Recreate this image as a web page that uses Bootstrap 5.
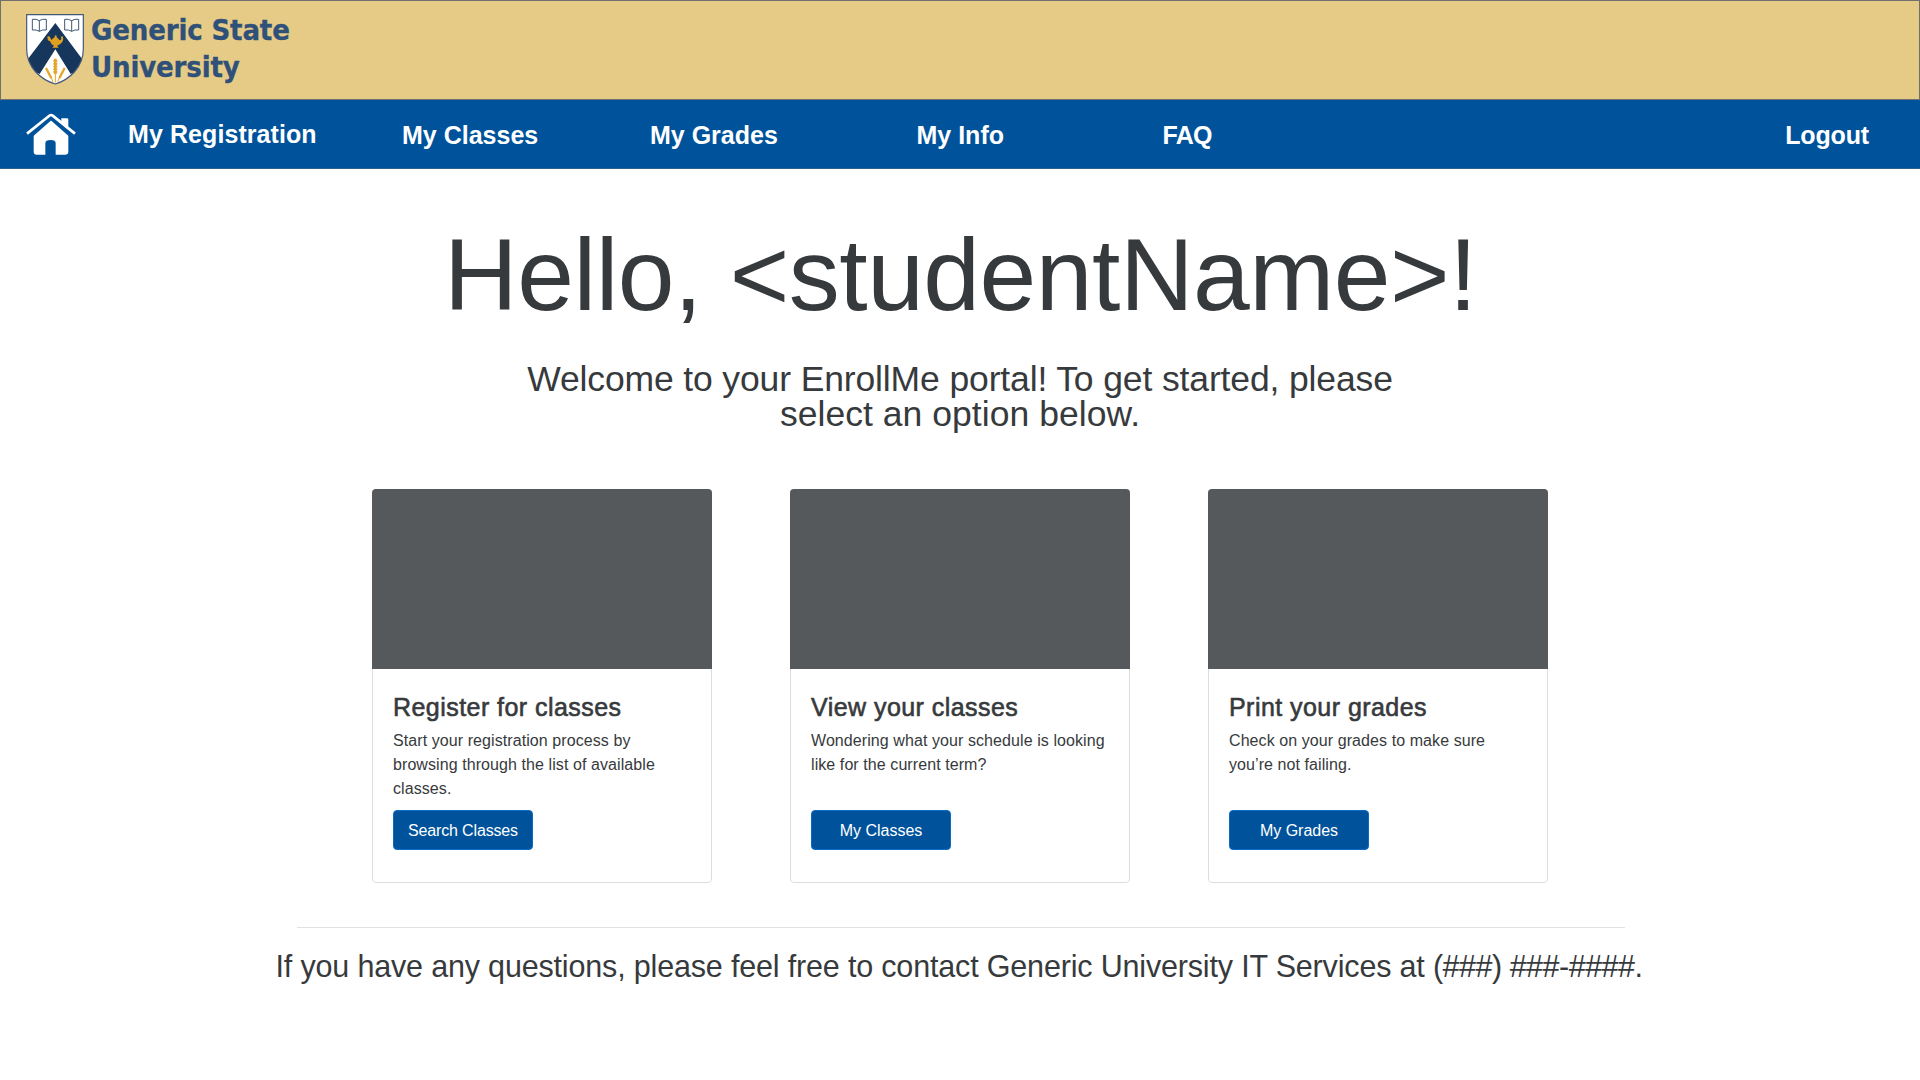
<!DOCTYPE html>
<html lang="en">
<head>
<meta charset="utf-8">
<meta name="viewport" content="width=device-width, initial-scale=1">
<title>EnrollMe – Generic State University</title>
<link href="https://cdn.jsdelivr.net/npm/bootstrap@5.3.0/dist/css/bootstrap.min.css" rel="stylesheet">
<style>
  body { font-family: "Liberation Sans", Arial, sans-serif; color: #373a3c; background: #fff; }
  .brand-bar { height: 100px; background: #e6cb86; border: 1px solid #707070; padding: 13px 25px 0; }
  .crest { width: 58px; height: 71px; }
  .brand-name { font: bold 29px/37px "DejaVu Sans Condensed", "DejaVu Sans", sans-serif; font-stretch: condensed; letter-spacing: -.16px; color: #2e5079; -webkit-text-stroke: .3px #2e5079; margin: -2px 0 0 7px; }
  .main-nav { height: 69px; background: #00539b; border-bottom: 1px solid #2f5f8c; padding: 0 51px 0 26px; }
  .home-icon { width: 50px; height: 42.3px; display: block; }
  .menu-grid { display: grid; grid-template-columns: 274px 248px 266.5px 246px auto; margin-left: 52px; }
  .main-nav .nav-link { padding: 2px 0 0; font-size: 25px; line-height: 30px; font-weight: 700; color: #fff; letter-spacing: 0; white-space: nowrap; }
  .main-nav .nav-link.active { padding: 1px 0 1px; letter-spacing: .08px; }
  .main-nav .link-faq { letter-spacing: -.7px; }
  .main-nav .link-out { letter-spacing: -.15px; }
  .hello { font-size: 102px; line-height: 100px; letter-spacing: -.5px; font-weight: 400; margin: 56px 0 37px; padding-left: 1px; }
  .welcome { font-size: 35.5px; line-height: 35px; letter-spacing: -.13px; margin-bottom: 57px; }
  .welcome .second { letter-spacing: .04px; }
  .option-row { gap: 78px; }
  .option { width: 340px; height: 394px; border: 1px solid #dcddde; border-radius: 4px; }
  .option-img { height: 180px; margin: -1px -1px 0; background: #55595c; border-radius: 4px 4px 0 0; }
  .option .card-body { padding: 23px 20px 0; }
  .option .card-title { font-size: 25px; line-height: 30px; letter-spacing: .45px; font-weight: 400; -webkit-text-stroke: .6px #373a3c; margin-bottom: 7px; white-space: nowrap; }
  .option .card-text { line-height: 24px; height: 72px; letter-spacing: .08px; margin: 0 0 9px; white-space: nowrap; }
  .option .btn { --bs-btn-bg: #00539b; --bs-btn-border-color: #0b6cc7; width: 140px; height: 40px; padding: 8px 0 6px; line-height: 24px; border-radius: 4px; }
  .btn-long { letter-spacing: -.15px; }
  .rule { width: 1328px; height: 1px; background: #e0e1e2; margin: 44px auto 20px; position: relative; left: .6px; }
  .contact { font-size: 30.5px; line-height: 36px; letter-spacing: -.17px; padding-right: 2px; white-space: nowrap; }
  .contact .phone { letter-spacing: -.5px; }
</style>
</head>
<body>
<header>
  <div class="brand-bar d-flex align-items-start">
    <svg class="crest flex-shrink-0" viewBox="78 42 174 213" aria-label="University crest">
      <defs><clipPath id="shield"><path d="M80 44H250V147C250 202 208 239 166 252C122 239 80 202 80 147Z"/></clipPath></defs>
      <path d="M80 44H250V147C250 202 208 239 166 252C122 239 80 202 80 147Z" fill="#fff"/>
      <path clip-path="url(#shield)" fill="#17365b" d="M166 69L262 198L212 222L166 148L119 222L68 198Z"/>
      <path d="M80 44H250V147C250 202 208 239 166 252C122 239 80 202 80 147Z" fill="none" stroke="#44597a" stroke-width="3.6"/>
      <g fill="none" stroke="#304a6b" stroke-width="2.8">
        <path id="book" d="M97 58Q109 56 118 62Q127 56 139 58V90Q127 88 118 94Q109 88 97 90ZM118 62V94"/>
        <use href="#book" x="97"/>
      </g>
      <g fill="#dfa022">
        <circle cx="167" cy="109" r="3"/>
        <path d="M164 111H170L179 121Q185 120 184 114Q179 109 188 109Q194 122 181 132Q176 136 171 137L176 143H157L162 137Q154 135 151 125L141 111Q147 107 150 111L154 120Z"/>
        <path d="M154 123Q143 125 142 116L145 115Q148 121 154 119Z"/>
      </g>
      <g stroke="#e3a72c" fill="none">
        <path d="M166 180V248M159 246Q153 227 142 210M173 246Q179 227 190 210" stroke-width="3"/>
        <path d="M166 176V222" stroke-width="8"/>
        <path d="M166 181V222" stroke-width="12" stroke-dasharray="5 3"/>
        <path d="M138 204L154 235M194 204L178 235" stroke-width="7"/>
      </g>
    </svg>
    <div class="brand-name">Generic State<br>University</div>
  </div>
  <nav class="main-nav d-flex align-items-center" aria-label="Main">
    <a href="#" aria-label="Home">
      <svg class="home-icon" viewBox="80 340 150 127" fill="#fff">
        <path d="M186 356H203Q207 356 207 360V392L186 374Z"/>
        <path d="M103 405L155 358L207 405V456Q207 465 197 465H169V431Q169 421 154 421Q138 421 138 431V465H112Q103 465 103 456Z"/>
        <path d="M91 410L155 354L219 410" fill="none" stroke="#00539b" stroke-width="13"/>
        <path d="M83 402L150 348Q155 344 160 348L227 402" fill="none" stroke="#fff" stroke-width="8"/>
      </svg>
    </a>
    <div class="menu-grid nav">
      <a class="nav-link active" href="#">My Registration</a>
      <a class="nav-link" href="#">My Classes</a>
      <a class="nav-link" href="#">My Grades</a>
      <a class="nav-link" href="#">My Info</a>
      <a class="nav-link link-faq" href="#">FAQ</a>
    </div>
    <a class="nav-link link-out ms-auto" href="#">Logout</a>
  </nav>
</header>
<main class="d-flex flex-column">
  <h1 class="hello text-center">Hello, &lt;studentName&gt;!</h1>
  <p class="welcome text-center">Welcome to your EnrollMe portal! To get started, please<br><span class="second">select an option below.</span></p>
  <div class="option-row d-flex justify-content-center">
    <div class="card option">
      <div class="option-img"></div>
      <div class="card-body">
        <h5 class="card-title">Register for classes</h5>
        <p class="card-text">Start your registration process by<br>browsing through the list of available<br>classes.</p>
        <a href="#" class="btn btn-primary btn-long">Search Classes</a>
      </div>
    </div>
    <div class="card option">
      <div class="option-img"></div>
      <div class="card-body">
        <h5 class="card-title">View your classes</h5>
        <p class="card-text">Wondering what your schedule is looking<br>like for the current term?</p>
        <a href="#" class="btn btn-primary">My Classes</a>
      </div>
    </div>
    <div class="card option">
      <div class="option-img"></div>
      <div class="card-body">
        <h5 class="card-title">Print your grades</h5>
        <p class="card-text">Check on your grades to make sure<br>you’re not failing.</p>
        <a href="#" class="btn btn-primary">My Grades</a>
      </div>
    </div>
  </div>
  <div class="rule"></div>
  <p class="contact text-center mb-0">If you have any questions, please feel free to contact Generic University IT Services at <span class="phone">(###) ###-####.</span></p>
</main>
<script src="https://cdn.jsdelivr.net/npm/bootstrap@5.3.0/dist/js/bootstrap.bundle.min.js"></script>
</body>
</html>
